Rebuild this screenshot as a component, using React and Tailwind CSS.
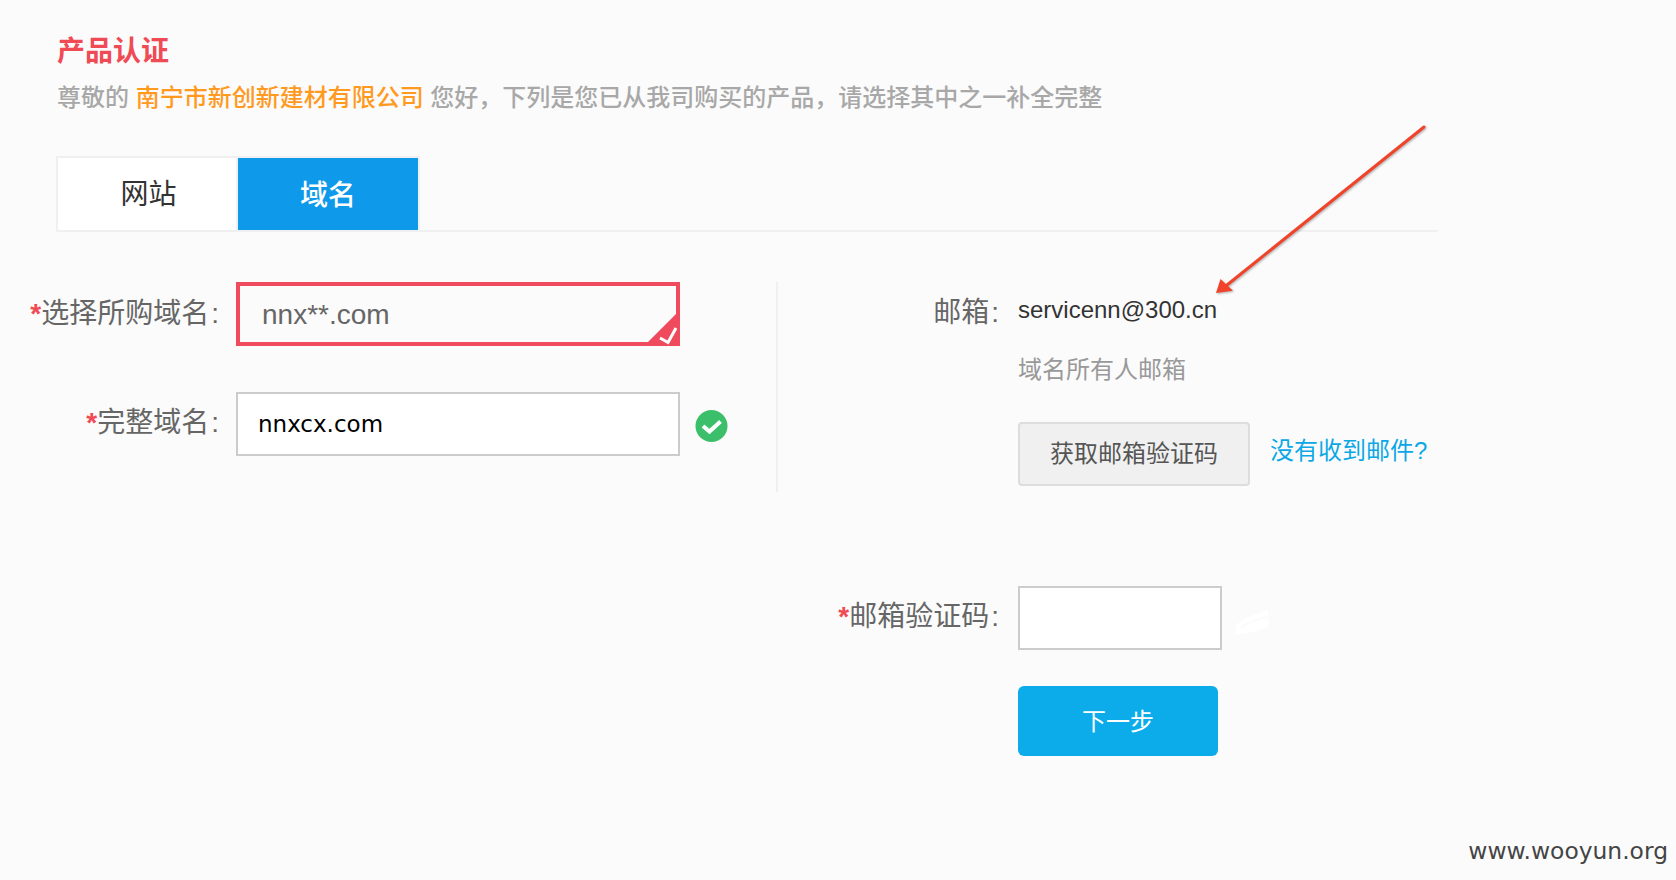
import React from 'react';

const Star = () => <span className="text-[#f04a55] font-bold">*</span>;

const Label = ({ required, text, className = '' }) => (
  <label className={`shrink-0 flex justify-end items-center whitespace-nowrap text-[28px] leading-none text-[#666] ${className}`}>
    {required && <Star />}
    <span>{text}</span>
    <span className="ml-[2px] mr-[1px]">:</span>
  </label>
);

const App = () => {
  return (
    <div className="relative h-[880px] w-full overflow-hidden bg-[#fbfbfb] font-['Liberation_Sans','Noto_Sans_CJK_SC',sans-serif]">
      <div className="pl-[57px] pt-[32px]">
        <h1 className="text-[28px] leading-[40px] font-bold text-[#f04a55]">产品认证</h1>
        <p className="mt-[6px] text-[24px] leading-[40px] font-medium text-[#a8a8a8] whitespace-nowrap">
          尊敬的 <span className="text-[#ff9a1f]">南宁市新创新建材有限公司</span> 您好，下列是您已从我司购买的产品，请选择其中之一补全完整
        </p>
      </div>

      {/* Tabs */}
      <div className="ml-[56px] mt-[38px] w-[1382px] border-b-2 border-[#f0f0f0]">
        <div className="flex w-[364px] h-[74px] border-2 border-b-0 border-[#f0f0f0] gap-[2px] bg-[#f0f0f0]">
          <button className="w-[178px] bg-white pl-[3px] pt-[2px] text-[28px] text-[#333]">网站</button>
          <button className="w-[180px] bg-[#0f99ea] pt-[3px] text-[28px] font-medium text-white">域名</button>
        </div>
      </div>

      {/* Form */}
      <div className="mt-[50px] flex">
        <div className="w-[776px] shrink-0">
          <div className="flex items-center">
            <Label required text="选择所购域名" className="w-[220px]" />
            <div className="relative ml-[16px] h-[64px] w-[444px] border-4 border-[#f04a5e]">
              <input
                readOnly
                value="nnx**.com"
                className="h-full w-full bg-transparent pl-[22px] pt-[2px] text-[28px] text-[#666] outline-none"
              />
              <svg className="absolute -bottom-[4px] -right-[4px] h-[33px] w-[36px]" viewBox="0 0 36 33">
                <path d="M0 33 L33 0 H36 V33 Z" fill="#f04a5e" />
                <path d="M16 25 L24 29.5 L32 15" fill="none" stroke="#fff" strokeWidth="3" />
              </svg>
            </div>
          </div>

          <div className="mt-[46px] flex items-center">
            <Label required text="完整域名" className="w-[220px] mb-[2px]" />
            <input
              readOnly
              value="nnxcx.com"
              className="ml-[16px] h-[64px] w-[444px] border-2 border-[#ccc] bg-white pl-[20px] font-['DejaVu_Sans',sans-serif] text-[23px] text-black outline-none"
            />
            <svg className="ml-[15px] mt-[4px] h-[32px] w-[33px]" viewBox="0 0 32 32">
              <circle cx="16" cy="16" r="16" fill="#3cbf6a" />
              <path d="M7.5 16 L14 21.5 L25 11.5" fill="none" stroke="#fff" strokeWidth="4" />
            </svg>
          </div>
        </div>

        <div className="h-[210px] border-l-2 border-[#f0f0f0]">
          <div className="flex h-[56px] items-center">
            <Label text="邮箱" className="w-[222px] mt-[6px]" />
            <span className="ml-[18px] text-[24px] text-[#333]">servicenn@300.cn</span>
          </div>
          <p className="ml-[240px] mt-[12px] text-[24px] leading-[40px] text-[#999]">域名所有人邮箱</p>
          <div className="ml-[240px] mt-[32px] flex items-center">
            <button className="h-[64px] w-[232px] rounded-[4px] border-2 border-[#ddd] bg-[#f0f0f0] text-[24px] text-[#555]">
              获取邮箱验证码
            </button>
            <a className="ml-[20px] mb-[6px] text-[24px] text-[#0ca8e6]">没有收到邮件?</a>
          </div>
        </div>
      </div>

      <div className="ml-[779px] mt-[94px] flex items-center">
        <Label required text="邮箱验证码" className="w-[221px] mb-[2px]" />
        <input className="ml-[18px] h-[64px] w-[204px] border-2 border-[#ccc] bg-white outline-none" />
        <svg className="ml-[12px] mt-[8px] h-[24px] w-[35px]" viewBox="0 0 35 24">
          <path d="M1 24 L3 14 C12 7 24 3 34 0 L35 16 C26 21 12 24 1 24 Z" fill="#fff" />
          <path d="M7 17 C16 11 26 8 35 7" fill="none" stroke="#fbfbfb" strokeWidth="2" />
        </svg>
      </div>
      <button className="ml-[1018px] mt-[36px] block h-[70px] w-[200px] rounded-[6px] bg-[#0caceb] pt-[2px] text-[24px] text-white">
        下一步
      </button>

      {/* Annotation arrow */}
      <svg className="absolute left-[1200px] top-[120px] h-[190px] w-[240px] drop-shadow-[1px_1px_1px_rgba(0,0,0,0.3)]" viewBox="0 0 240 190">
        <path d="M224 7 L27 165" stroke="#f0432a" strokeWidth="3" strokeLinecap="round" />
        <path d="M16 173 L20.5 159 L33 170.7 Z" fill="#f0432a" />
      </svg>

      <span className="absolute right-[8px] top-[835px] font-['DejaVu_Sans',sans-serif] text-[23.4px] leading-[32px] text-[#444]">
        www.wooyun.org
      </span>
    </div>
  );
};

export default App;
